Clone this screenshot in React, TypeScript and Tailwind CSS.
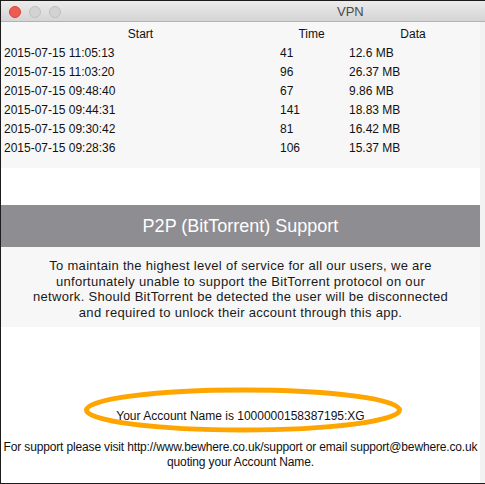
const sessions = [
  { start: '2015-07-15 11:05:13', time: '41', data: '12.6 MB' },
  { start: '2015-07-15 11:03:20', time: '96', data: '26.37 MB' },
  { start: '2015-07-15 09:48:40', time: '67', data: '9.86 MB' },
  { start: '2015-07-15 09:44:31', time: '141', data: '18.83 MB' },
  { start: '2015-07-15 09:30:42', time: '81', data: '16.42 MB' },
  { start: '2015-07-15 09:28:36', time: '106', data: '15.37 MB' },
];

export default function App() {
  return (
    <div
      className="w-[485px] h-[484px] flex flex-col overflow-hidden bg-white border-t border-l border-b border-[#1c1c1c] text-[#111] text-[12px]"
      style={{ fontFamily: '"Liberation Sans", Arial, sans-serif' }}
    >
      {/* title bar */}
      <div className="relative h-[21px] shrink-0 bg-gradient-to-b from-[#ececec] to-[#d4d4d4] border-b border-[#b3b3b3]">
        <div className="absolute left-[8px] top-[5px] flex gap-[8px]">
          <span className="w-[12px] h-[12px] rounded-full bg-[#ee5b52] border border-[#d9443c]" />
          <span className="w-[12px] h-[12px] rounded-full bg-[#d3d3d3] border border-[#bfbfbf]" />
          <span className="w-[12px] h-[12px] rounded-full bg-[#d3d3d3] border border-[#bfbfbf]" />
        </div>
        <div className="absolute left-[336px] top-[3px] text-[13px] leading-[15px] text-[#4a4a4a]">VPN</div>
      </div>

      <div className="flex flex-1 min-h-0">
        <div className="w-[479px] flex flex-col">
          {/* sessions table */}
          <div className="h-[146px] bg-[#f7f7f7] pt-[3px]">
            <div className="grid grid-cols-[279px_69px_131px] leading-[19px]">
              <div className="text-center">Start</div>
              <div className="text-center pr-[6px]">Time</div>
              <div className="text-center pr-[3px]">Data</div>
              {sessions.map((s) => (
                <div key={s.start} className="contents">
                  <div className="pl-[3px]">{s.start}</div>
                  <div>{s.time}</div>
                  <div>{s.data}</div>
                </div>
              ))}
            </div>
          </div>

          <div className="h-[37px] bg-white" />

          <div className="h-[42px] bg-[#8e8d91] flex items-center justify-center text-white text-[18px]">
            P2P (BitTorrent) Support
          </div>

          <div className="h-[80px] bg-[#f7f7f7] pt-[11px] text-center text-[13px] leading-[15.5px] tracking-[0.3px] text-[#1a1a1a]">
            To maintain the highest level of service for all our users, we are
            <br />
            unfortunately unable to support the BitTorrent protocol on our
            <br />
            network. Should BitTorrent be detected the user will be disconnected
            <br />
            and required to unlock their account through this app.
          </div>

          <div className="flex-1 bg-white flex flex-col justify-end pb-[13px] text-center leading-[15px]">
            <div className="relative h-[15px]">
              <span className="relative z-10">Your Account Name is 1000000158387195:XG</span>
              {/* hand-drawn highlight around the account name */}
              <svg
                className="absolute left-[82px] top-[-23px]"
                width="320"
                height="48"
                viewBox="0 0 320 48"
              >
                <ellipse cx="160" cy="24" rx="156.5" ry="20" fill="none" stroke="#ffa500" strokeWidth="5" />
              </svg>
            </div>
            <p className="mt-[16px] whitespace-nowrap tracking-[-0.15px]">
              For support please visit http://www.bewhere.co.uk/support or email support@bewhere.co.uk
              <br />
              quoting your Account Name.
            </p>
          </div>
        </div>
        <div className="flex-1 bg-[#f2f2f2]" />
      </div>
    </div>
  );
}
